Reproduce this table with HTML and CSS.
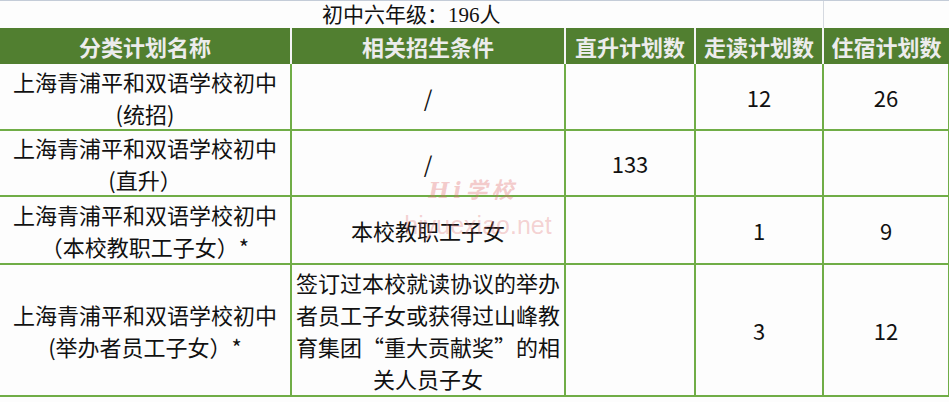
FILE: index.html
```html
<!DOCTYPE html>
<html lang="zh-CN">
<head>
<meta charset="utf-8">
<link rel="stylesheet" href="styles.css">
</head>
<body>
<div class="sheet">
  <table class="plan">
    <colgroup>
      <col class="c1"><col class="c2"><col class="c3"><col class="c4"><col class="c5">
    </colgroup>
    <tr class="title-row">
      <td colspan="4" class="title"><div class="title-box">初中六年级：196人</div></td>
      <td class="title-side"><div class="title-box"></div></td>
    </tr>
    <tr class="head">
      <th>分类计划名称</th>
      <th>相关招生条件</th>
      <th>直升计划数</th>
      <th>走读计划数</th>
      <th>住宿计划数</th>
    </tr>
    <tr class="r1">
      <td>上海青浦平和双语学校初中<br>(统招)</td>
      <td class="slash">/</td>
      <td></td>
      <td>12</td>
      <td>26</td>
    </tr>
    <tr class="r2">
      <td>上海青浦平和双语学校初中<br>(直升）</td>
      <td class="slash">/</td>
      <td>133</td>
      <td></td>
      <td></td>
    </tr>
    <tr class="r3">
      <td>上海青浦平和双语学校初中<br>（本校教职工子女）*</td>
      <td>本校教职工子女</td>
      <td></td>
      <td>1</td>
      <td>9</td>
    </tr>
    <tr class="r4">
      <td>上海青浦平和双语学校初中<br>(举办者员工子女）*</td>
      <td>签订过本校就读协议的举办<br>者员工子女或获得过山峰教<br>育集团“重大贡献奖”的相<br>关人员子女</td>
      <td></td>
      <td>3</td>
      <td>12</td>
    </tr>
  </table>
  <div class="watermark">
    <span class="wm-logo">Hi学校</span>
    <span class="wm-url">hiyuexiao.net</span>
  </div>
</div>
</body>
</html>
```

FILE: styles.css
```css
html, body {
  margin: 0;
  padding: 0;
  background: #fdfdfd;
}

.sheet {
  position: relative;
  width: 949px;
  height: 402px;
  overflow: hidden;
}

.plan {
  width: 949px;
  border-collapse: collapse;
  table-layout: fixed;
  font-family: "Noto Sans CJK SC", "Noto Sans", sans-serif;
  font-size: 22px;
  color: #111;
}

.c1 { width: 291px; }
.c2 { width: 274px; }
.c3 { width: 130px; }
.c4 { width: 128px; }
.c5 { width: 126px; }

.plan td, .plan th {
  padding: 0;
  text-align: center;
  vertical-align: middle;
  line-height: 32px;
  white-space: nowrap;
}

.title-row td {
  border-top: 1px solid #c4ccd8;
}

.title-box {
  height: 27px;
  overflow: hidden;
  font-family: "Liberation Serif", "Noto Sans CJK SC", serif;
  font-size: 21px;
  line-height: 28px;
  color: #111;
}

.title-side {
  border-left: 1px solid #d5d9e0;
}

.head th {
  height: 36px;
  line-height: 36px;
  background: #517f30;
  color: #ececec;
  font-weight: 700;
  font-size: 22px;
  border-left: 2px solid #f4f4f4;
}

.head th:first-child {
  border-left: none;
}

.r1 td, .r2 td, .r3 td, .r4 td {
  border: 2px solid #70ad47;
}

.r1 td:first-child, .r2 td:first-child, .r3 td:first-child, .r4 td:first-child {
  border-left: none;
}

.r1 td { height: 65px; }
.r2 td { height: 64px; }
.r3 td { height: 66px; }
.r4 td { height: 130px; }

.head + .r1 td {
  border-top: none;
}

.watermark {
  position: absolute;
  left: 398px;
  top: 176px;
  width: 160px;
  display: flex;
  flex-direction: column;
  align-items: center;
  pointer-events: none;
}

.wm-logo {
  font-family: "DejaVu Serif", "Noto Sans CJK SC", serif;
  font-style: italic;
  font-weight: 700;
  font-size: 22px;
  letter-spacing: 4px;
  color: rgba(225, 110, 110, 0.35);
  line-height: 28px;
  margin-right: 10px;
}

.wm-url {
  font-family: "Liberation Sans", "Noto Sans", sans-serif;
  font-size: 25px;
  color: rgba(225, 120, 120, 0.32);
  line-height: 30px;
  margin-top: 6px;
}
```
